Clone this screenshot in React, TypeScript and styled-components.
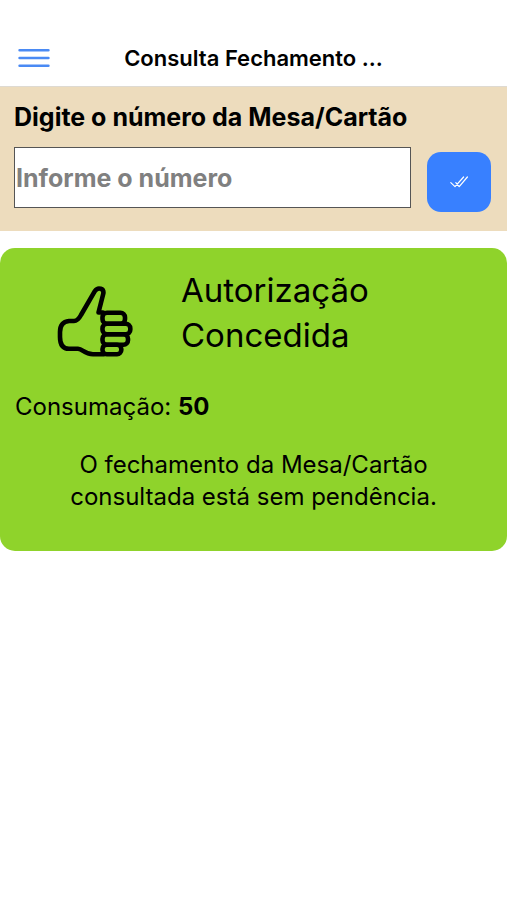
import React, { useState } from "react";
import styled, { createGlobalStyle } from "styled-components";

const GlobalStyle = createGlobalStyle`
  *, *::before, *::after { box-sizing: border-box; }
  body {
    margin: 0;
    background: #fff;
    color: #000;
    font-family: Inter, "Liberation Sans", sans-serif;
  }
`;

const Toolbar = styled.header`
  display: grid;
  grid-template-columns: 32px 1fr 32px;
  align-items: center;
  padding: 36px 18px 6px;
  border-bottom: 1px solid #dedad2;
`;

const MenuButton = styled.button`
  display: flex;
  padding: 0;
  border: 0;
  background: none;
  color: #4a8af4;
  cursor: pointer;
`;

const Title = styled.h1`
  margin: 0;
  font-size: 22px;
  line-height: 44px;
  font-weight: 600;
  text-align: center;
  white-space: nowrap;
`;

const SearchForm = styled.form`
  padding: 12px 16px 19px 14px;
  background: #eddcbd;
`;

const FieldLabel = styled.label`
  display: block;
  margin-bottom: 12px;
  font-size: 25px;
  line-height: 36px;
  font-weight: 700;
`;

const FieldRow = styled.div`
  display: flex;
  align-items: flex-end;
  gap: 16px;
`;

const NumberInput = styled.input`
  flex: 1;
  min-width: 0;
  height: 61px;
  margin-bottom: 4px;
  padding: 0 1px;
  border: 1px solid #555;
  border-radius: 0;
  background: #fff;
  color: #000;
  font: 700 25px Inter, "Liberation Sans", sans-serif;
  &::placeholder { color: #808080; opacity: 1; }
`;

const SubmitButton = styled.button`
  display: flex;
  align-items: center;
  justify-content: center;
  width: 64px;
  height: 60px;
  padding: 0;
  border: 0;
  border-radius: 14px;
  background: #3880ff;
  color: #fff;
  cursor: pointer;
`;

const ResultCard = styled.section`
  margin-top: 17px;
  padding: 20px 15px 38px;
  border-radius: 15px;
  background: #8fd32b;
`;

const ResultHeader = styled.div`
  display: grid;
  grid-template-columns: 160px 1fr;
  column-gap: 6px;
  align-items: center;
`;

const ThumbIcon = styled.svg`
  justify-self: center;
  margin-top: 18px;
`;

const ResultTitle = styled.h2`
  max-width: 240px;
  margin: 0;
  font-size: 33px;
  line-height: 45px;
  font-weight: 400;
`;

const Consumption = styled.p`
  margin: 33px 0 26px;
  font-size: 24px;
  line-height: 32px;
`;

const Message = styled.p`
  max-width: 400px;
  margin: 0 auto;
  font-size: 24px;
  line-height: 32px;
  text-align: center;
`;

export default function App() {
  const [value, setValue] = useState("");

  return (
    <>
      <GlobalStyle />
      <Toolbar>
        <MenuButton type="button" aria-label="Menu">
          <svg width="32" height="20" viewBox="0 0 32 20" stroke="currentColor" strokeWidth="2.6" strokeLinecap="round">
            <path d="M1.6 2.3h28.8M1.6 10h28.8M1.6 17.8h28.8" />
          </svg>
        </MenuButton>
        <Title>Consulta Fechamento ...</Title>
      </Toolbar>
      <main>
        <SearchForm onSubmit={(event) => event.preventDefault()}>
          <FieldLabel htmlFor="numero">Digite o número da Mesa/Cartão</FieldLabel>
          <FieldRow>
            <NumberInput
              id="numero"
              inputMode="numeric"
              placeholder="Informe o número"
              value={value}
              onChange={(event) => setValue(event.target.value)}
            />
            <SubmitButton type="submit" aria-label="Consultar">
              <svg width="20" height="14" viewBox="0 0 20 14" fill="none" stroke="currentColor" strokeWidth="1.2" strokeLinecap="round" strokeLinejoin="round">
                <path d="M1.8 7.6l4.2 4L14.6 2M6.8 7.6l3.4 4L18.4 2" />
              </svg>
            </SubmitButton>
          </FieldRow>
        </SearchForm>
        <ResultCard>
          <ResultHeader>
            <ThumbIcon
              width="76"
              height="72"
              viewBox="0 0 76 72"
              fill="none"
              stroke="#000"
              strokeWidth="4.6"
              strokeLinecap="round"
              strokeLinejoin="round"
              aria-hidden="true"
            >
              <path d="M46 26.5H41.5L46.2 8C47.5 2.5 41 .5 37.8 5.2L24 29Q20.8 35 17 35H12Q3 36 3 46V51Q3 62.8 12 62.8H21C26 63 27 68.2 36 68.2H47" />
              <rect x="45.5" y="26.7" width="22.5" height="11" rx="4.5" />
              <rect x="45.5" y="37.7" width="27.8" height="10.5" rx="4.5" />
              <rect x="45.5" y="48.2" width="25.5" height="10.5" rx="4.5" />
              <rect x="45.5" y="58.7" width="18.8" height="9.5" rx="4.2" />
            </ThumbIcon>
            <ResultTitle>Autorização Concedida</ResultTitle>
          </ResultHeader>
          <Consumption>
            Consumação: <strong>50</strong>
          </Consumption>
          <Message>O fechamento da Mesa/Cartão consultada está sem pendência.</Message>
        </ResultCard>
      </main>
    </>
  );
}
